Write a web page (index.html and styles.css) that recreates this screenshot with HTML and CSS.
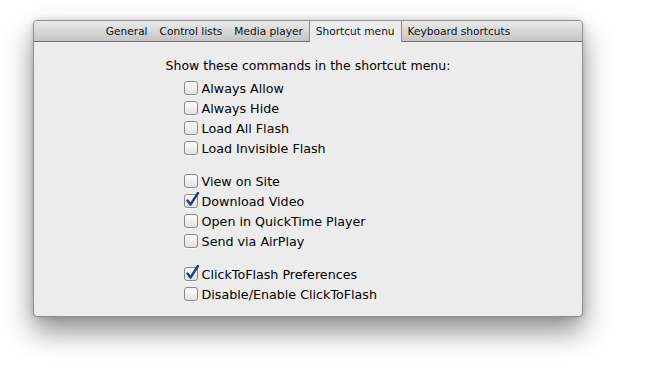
FILE: index.html
```html
<!DOCTYPE html>
<html lang="en">
<head>
    <meta charset="UTF-8">
    <title>ClickToFlash Preferences</title>
    <link rel="stylesheet" href="styles.css">
</head>
<body>
    <div class="page">
        <div class="window">
            <div class="tabbar">
                <div class="tab">General</div>
                <div class="tab">Control lists</div>
                <div class="tab">Media player</div>
                <div class="tab active">Shortcut menu</div>
                <div class="tab">Keyboard shortcuts</div>
            </div>
            <div class="content">
                <div class="panel">
                    <div class="heading">Show these commands in the shortcut menu:</div>
                    <ul class="group">
                        <li class="item"><span class="box"></span>Always Allow</li>
                        <li class="item"><span class="box"></span>Always Hide</li>
                        <li class="item"><span class="box"></span>Load All Flash</li>
                        <li class="item"><span class="box"></span>Load Invisible Flash</li>
                    </ul>
                    <ul class="group">
                        <li class="item"><span class="box"></span>View on Site</li>
                        <li class="item"><span class="box on"><svg viewBox="0 0 16 16" width="16" height="16"><path d="M3.5 8.5 L6.5 12.5 L14 1" /></svg></span>Download Video</li>
                        <li class="item"><span class="box"></span>Open in QuickTime Player</li>
                        <li class="item"><span class="box"></span>Send via AirPlay</li>
                    </ul>
                    <ul class="group">
                        <li class="item"><span class="box on"><svg viewBox="0 0 16 16" width="16" height="16"><path d="M3.5 8.5 L6.5 12.5 L14 1" /></svg></span>ClickToFlash Preferences</li>
                        <li class="item"><span class="box"></span>Disable/Enable ClickToFlash</li>
                    </ul>
                </div>
            </div>
        </div>
    </div>
</body>
</html>
```

FILE: styles.css
```css
*{
    padding: 0;
    margin: 0;
    box-sizing: border-box;
}
ul li{
    list-style: none;
}
html,body{
    height: 100%;
}
body{
    background-color: #fff;
    font-family: "DejaVu Sans", Verdana, sans-serif;
    color: #000;
}

.page{
    height: 100%;
    padding: 20px 0 0 33px;
}
.window{
    width: 550px;
    height: 297px;
    border: 1px solid #8f8f8f;
    border-radius: 4px;
    background-color: #ececec;
    box-shadow: 0 14px 28px rgba(0, 0, 0, .45), 0 0 6px rgba(0, 0, 0, .15);
    overflow: hidden;
}

.tabbar{
    display: flex;
    justify-content: center;
    height: 21px;
    background: linear-gradient(#ebebeb, #c4c4c4);
    border-bottom: 1px solid #6e6e6e;
}
.tab{
    padding: 0 6px;
    height: 20px;
    line-height: 20px;
    font-size: 10.6px;
    color: #111;
}
.tab.active{
    height: 21px;
    background-color: #ececec;
    border-left: 1px solid #8a8a8a;
    border-right: 1px solid #8a8a8a;
}

.content{
    display: flex;
    justify-content: center;
    padding-top: 16px;
}
.heading{
    font-size: 12.5px;
    line-height: 16px;
    margin-bottom: 4px;
}
.group{
    padding-left: 18px;
    margin-bottom: 13px;
}
.item{
    display: flex;
    align-items: center;
    height: 20px;
    font-size: 12.7px;
}
.box{
    position: relative;
    width: 14px;
    height: 14px;
    margin-right: 4px;
    border: 1px solid #888;
    border-radius: 3px;
    background: linear-gradient(#fdfdfd, #e2e2e2);
    box-shadow: 0 1px 0 rgba(255, 255, 255, .6);
}
.box svg{
    position: absolute;
    left: -1px;
    top: -3px;
    fill: none;
    stroke: #1d3e86;
    stroke-width: 2.4;
    stroke-linecap: round;
    stroke-linejoin: round;
}
```
